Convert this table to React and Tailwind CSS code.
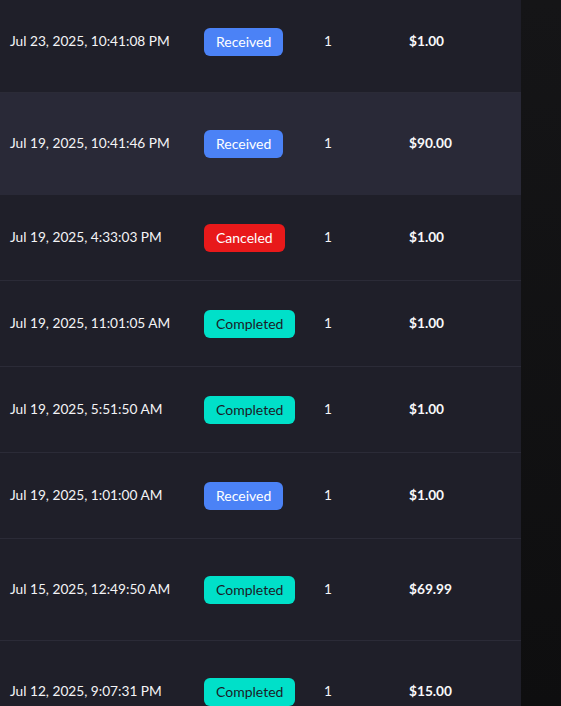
import React from 'react';

const orders = [
  { date: 'Jul 23, 2025, 10:41:08 PM', status: 'Received', qty: 1, total: '$1.00', tall: true },
  { date: 'Jul 19, 2025, 10:41:46 PM', status: 'Received', qty: 1, total: '$90.00', tall: true, hover: true },
  { date: 'Jul 19, 2025, 4:33:03 PM', status: 'Canceled', qty: 1, total: '$1.00' },
  { date: 'Jul 19, 2025, 11:01:05 AM', status: 'Completed', qty: 1, total: '$1.00' },
  { date: 'Jul 19, 2025, 5:51:50 AM', status: 'Completed', qty: 1, total: '$1.00' },
  { date: 'Jul 19, 2025, 1:01:00 AM', status: 'Received', qty: 1, total: '$1.00' },
  { date: 'Jul 15, 2025, 12:49:50 AM', status: 'Completed', qty: 1, total: '$69.99', tall: true },
  { date: 'Jul 12, 2025, 9:07:31 PM', status: 'Completed', qty: 1, total: '$15.00', tall: true },
];

const badgeStyles = {
  Received: 'bg-[#4b82f6] text-white',
  Canceled: 'bg-[#e8191a] text-white',
  Completed: 'bg-[#00e0c9] text-[#1b1b27]',
};

function StatusBadge({ status }) {
  return (
    <span className={`inline-flex items-center h-7 px-3 rounded-md text-[14px] ${badgeStyles[status]}`}>
      {status}
    </span>
  );
}

export default function App() {
  return (
    <div className="flex h-[706px] overflow-hidden bg-[#121214] font-['Lato','Liberation_Sans',sans-serif]">
      <div className="w-[521px] shrink-0 bg-[#1f1f29] overflow-hidden">
        <div className="-mt-[9px]">
          {orders.map((o, i) => (
            <div
              key={i}
              className={`grid grid-cols-[204px_120px_85px_1fr] items-center border-b ${
                o.hover ? 'bg-[#292937] border-[#292937]' : 'border-[#2b2b37]'
              } ${o.tall ? 'h-[102px]' : 'h-[86px]'}`}
            >
              <div className="pl-[10px] text-[13.7px] text-[#f4f4f6]">{o.date}</div>
              <div className="flex">
                <StatusBadge status={o.status} />
              </div>
              <div className="text-[13.7px] text-[#f4f4f6]">{o.qty}</div>
              <div className="text-[13.7px] font-bold text-[#f8f8fa]">{o.total}</div>
            </div>
          ))}
        </div>
      </div>
      <div className="flex-1 bg-linear-to-b from-[#151517] to-[#0e0e0f]" />
    </div>
  );
}
